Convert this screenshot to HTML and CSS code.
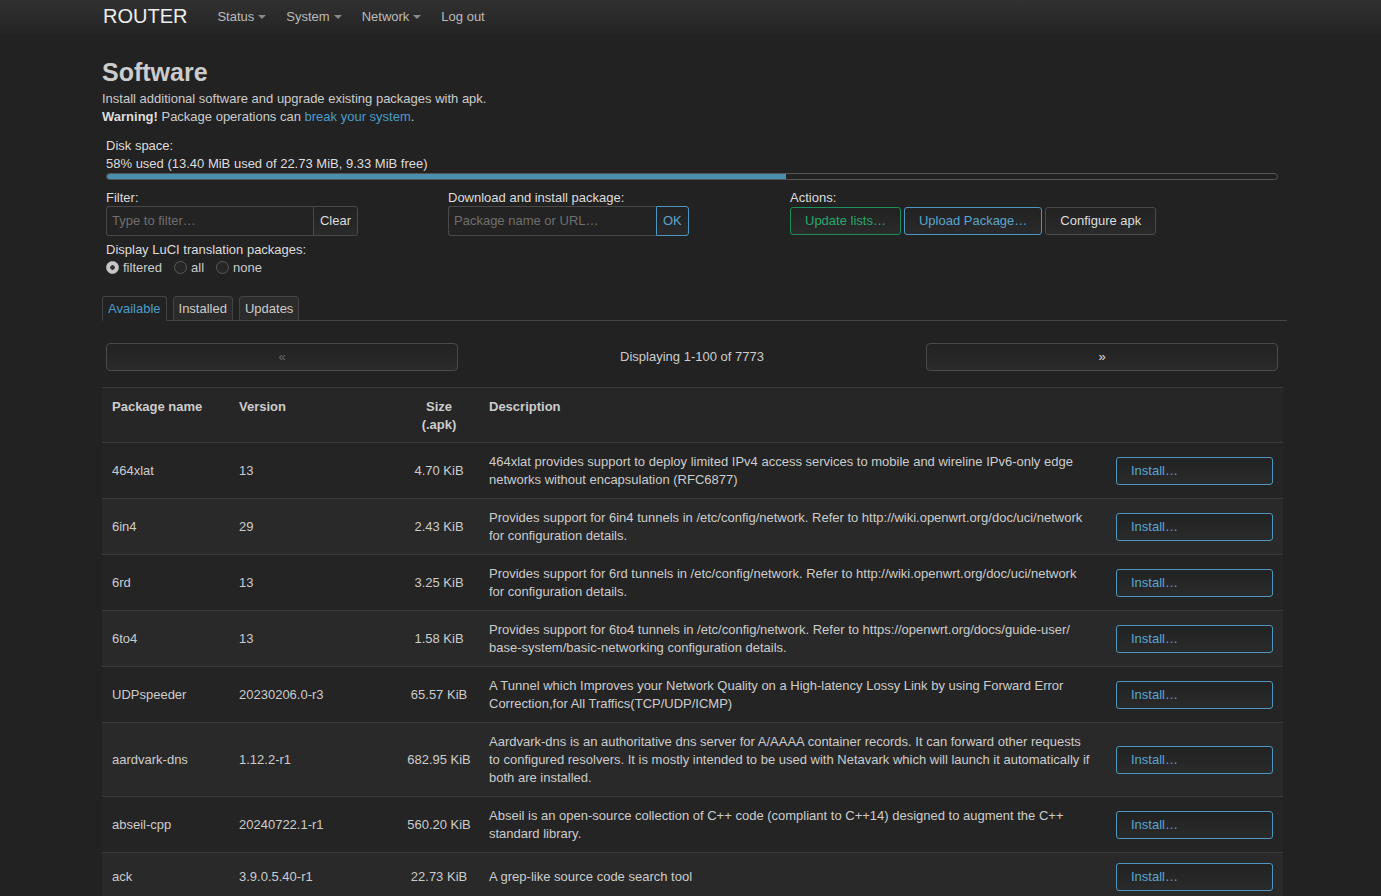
FILE: index.html
```html
<!DOCTYPE html>
<html lang="en">
<head>
    <meta charset="UTF-8">
    <meta name="viewport" content="width=device-width, initial-scale=1.0">
    <title>ROUTER - Software - LuCI</title>
    <link rel="stylesheet" href="styles.css">
</head>
<body>
    <header class="navbar">
        <a class="brand" href="#">ROUTER</a>
        <ul class="nav">
            <li><a href="#">Status<span class="caret"></span></a></li>
            <li><a href="#">System<span class="caret"></span></a></li>
            <li><a href="#">Network<span class="caret"></span></a></li>
            <li><a href="#">Log out</a></li>
        </ul>
    </header>

    <div class="container">
        <h2>Software</h2>
        <div class="map-descr">
            Install additional software and upgrade existing packages with apk.<br>
            <strong>Warning!</strong> Package operations can <a href="#">break your system</a>.
        </div>

        <div class="controls">
            <div class="disk">
                <label>Disk space:</label>
                <div>58% used (13.40 MiB used of 22.73 MiB, 9.33 MiB free)</div>
                <div class="progress"><div class="progress-fill" style="width:58%"></div></div>
            </div>

            <div class="control-row">
                <div class="control">
                    <label>Filter:</label>
                    <div class="input-group">
                        <input type="text" placeholder="Type to filter…">
                        <button class="btn">Clear</button>
                    </div>
                    <label class="radio-title">Display LuCI translation packages:</label>
                    <div class="radios">
                        <label><input type="radio" name="i18n" checked>filtered</label>
                        <label><input type="radio" name="i18n">all</label>
                        <label><input type="radio" name="i18n">none</label>
                    </div>
                </div>
                <div class="control">
                    <label>Download and install package:</label>
                    <div class="input-group">
                        <input type="text" placeholder="Package name or URL…">
                        <button class="btn btn-blue">OK</button>
                    </div>
                </div>
                <div class="control">
                    <label>Actions:</label>
                    <div class="actions">
                        <button class="btn btn-green">Update lists…</button>
                        <button class="btn btn-blue">Upload Package…</button>
                        <button class="btn">Configure apk</button>
                    </div>
                </div>
            </div>
        </div>

        <ul class="tabs">
            <li class="active"><a href="#">Available</a></li>
            <li><a href="#">Installed</a></li>
            <li><a href="#">Updates</a></li>
        </ul>

        <div class="pager">
            <button class="btn page-btn" disabled>«</button>
            <div class="pager-info">Displaying 1-100 of 7773</div>
            <button class="btn page-btn">»</button>
        </div>

        <table class="table">
            <colgroup>
                <col style="width:127px">
                <col style="width:170px">
                <col style="width:80px">
                <col style="width:627px">
                <col style="width:177px">
            </colgroup>
            <thead>
                <tr>
                    <th>Package name</th>
                    <th>Version</th>
                    <th class="center">Size<br>(.apk)</th>
                    <th>Description</th>
                    <th></th>
                </tr>
            </thead>
            <tbody>
                <tr>
                    <td>464xlat</td>
                    <td>13</td>
                    <td class="center">4.70 KiB</td>
                    <td class="descr">464xlat provides support to deploy limited IPv4 access services to mobile and wireline IPv6-only edge networks without encapsulation (RFC6877)</td>
                    <td><button class="btn btn-blue install">Install…</button></td>
                </tr>
                <tr>
                    <td>6in4</td>
                    <td>29</td>
                    <td class="center">2.43 KiB</td>
                    <td class="descr">Provides support for 6in4 tunnels in /etc/config/network. Refer to http://wiki.openwrt.org/doc/uci/network for configuration details.</td>
                    <td><button class="btn btn-blue install">Install…</button></td>
                </tr>
                <tr>
                    <td>6rd</td>
                    <td>13</td>
                    <td class="center">3.25 KiB</td>
                    <td class="descr">Provides support for 6rd tunnels in /etc/config/network. Refer to http://wiki.openwrt.org/doc/uci/network for configuration details.</td>
                    <td><button class="btn btn-blue install">Install…</button></td>
                </tr>
                <tr>
                    <td>6to4</td>
                    <td>13</td>
                    <td class="center">1.58 KiB</td>
                    <td class="descr">Provides support for 6to4 tunnels in /etc/config/network. Refer to https://openwrt.org/docs/guide-user/<wbr>base-system/basic-networking configuration details.</td>
                    <td><button class="btn btn-blue install">Install…</button></td>
                </tr>
                <tr>
                    <td>UDPspeeder</td>
                    <td>20230206.0-r3</td>
                    <td class="center">65.57 KiB</td>
                    <td class="descr">A Tunnel which Improves your Network Quality on a High-latency Lossy Link by using Forward Error Correction,for All Traffics(TCP/UDP/ICMP)</td>
                    <td><button class="btn btn-blue install">Install…</button></td>
                </tr>
                <tr>
                    <td>aardvark-dns</td>
                    <td>1.12.2-r1</td>
                    <td class="center">682.95 KiB</td>
                    <td class="descr">Aardvark-dns is an authoritative dns server for A/AAAA container records. It can forward other requests to configured resolvers. It is mostly intended to be used with Netavark which will launch it automatically if both are installed.</td>
                    <td><button class="btn btn-blue install">Install…</button></td>
                </tr>
                <tr>
                    <td>abseil-cpp</td>
                    <td>20240722.1-r1</td>
                    <td class="center">560.20 KiB</td>
                    <td class="descr">Abseil is an open-source collection of C++ code (compliant to C++14) designed to augment the C++ standard library.</td>
                    <td><button class="btn btn-blue install">Install…</button></td>
                </tr>
                <tr>
                    <td>ack</td>
                    <td>3.9.0.5.40-r1</td>
                    <td class="center">22.73 KiB</td>
                    <td class="descr">A grep-like source code search tool</td>
                    <td><button class="btn btn-blue install">Install…</button></td>
                </tr>
            </tbody>
        </table>
    </div>
</body>
</html>
```

FILE: styles.css
```css
body {
    margin: 0;
    background: #222;
    color: #ccc;
    font-family: "Liberation Sans", Arial, sans-serif;
    font-size: 13px;
    line-height: 18px;
}
a { color: #4a9cc9; text-decoration: none; }

.navbar {
    height: 34px;
    display: flex;
    align-items: center;
    padding-left: 103px;
    background: linear-gradient(#313131, #242424);
}
.brand { color: #eee; font-size: 20px; margin-right: 20px; margin-top: -2px; }
.nav { display: flex; list-style: none; margin: 0; padding: 0; }
.nav a { display: flex; align-items: center; padding: 0 10px; color: #bbb; }
.caret {
    width: 0; height: 0;
    margin-left: 4px;
    border-left: 4px solid transparent;
    border-right: 4px solid transparent;
    border-top: 4px solid #888;
}

.container { width: 1185px; margin-left: 102px; }
h2 {
    margin: 24px 0 4px;
    font-size: 25px;
    line-height: 28px;
    color: #ccc;
}
.map-descr strong { color: #ddd; }

.controls { padding: 0 9px 0 4px; }
.disk { margin-top: 11px; color: #ddd; }
.disk label { display: block; }
.progress {
    height: 5px;
    border: 1px solid #555;
    border-radius: 4px;
    background: #222;
    overflow: hidden;
}
.progress-fill { height: 100%; background: #4a8fb0; }

.control-row { display: grid; grid-template-columns: 342px 342px auto; margin-top: 9px; }
.control label { display: block; color: #ddd; line-height: 17px; }
.input-group { display: flex; width: 252px; height: 30px; }
.input-group input {
    width: 208px;
    box-sizing: border-box;
    background: #232323;
    border: 1px solid #484848;
    border-right: 0;
    border-radius: 3px 0 0 3px;
    padding: 0 5px;
    color: #ccc;
    font: inherit;
    outline: none;
}
.input-group input::placeholder { color: #6f6f6f; }
.input-group .btn { border-radius: 0 3px 3px 0; height: 30px; padding: 0 6px; }

.btn {
    box-sizing: border-box;
    height: 28px;
    padding: 0 14px;
    border: 1px solid #4a4a4a;
    border-radius: 3px;
    background: linear-gradient(#222, #2a2a2a);
    color: #ddd;
    font: inherit;
    cursor: pointer;
}
.btn-blue { border-color: #4b97bf; color: #5aa5cf; }
.btn-green { border-color: #1d8f5b; color: #27a86a; }
.actions { display: flex; gap: 3px; margin-top: 1px; }

.control .radio-title { margin-top: 5px; line-height: 18px; }
.radios { display: flex; }
.radios label { display: flex; align-items: center; margin-right: 12px; color: #ccc; }
.radios input {
    appearance: none;
    width: 13px; height: 13px;
    margin: 0 4px 0 0;
    border: 1px solid #5a5a5a;
    border-radius: 50%;
    background: #262626;
}
.radios input:checked {
    border-color: #bbb;
    background: radial-gradient(circle, #333 0 2px, #c8c8c8 2.5px);
}

.tabs {
    display: flex;
    gap: 6px;
    list-style: none;
    margin: 20px 0 0;
    padding: 0;
    border-bottom: 1px solid #444;
}
.tabs li { margin-bottom: -1px; }
.tabs a {
    display: block;
    padding: 3px 5px 2px;
    border: 1px solid #444;
    border-radius: 3px 3px 0 0;
    background: #2b2b2b;
    color: #ccc;
}
.tabs .active a { background: #222; border-bottom-color: #222; color: #4a9cc9; }

.pager {
    display: grid;
    grid-template-columns: 352px 1fr 352px;
    align-items: center;
    margin: 22px 9px 16px 4px;
}
.pager-info { text-align: center; color: #ccc; }
.page-btn { width: 352px; border-radius: 4px; color: #ddd; }
.page-btn:disabled { color: #666; }

.table {
    width: 1181px;
    table-layout: fixed;
    border-collapse: collapse;
    background: #242424;
}
.table th, .table td {
    padding: 10px 10px 9px;
    border-top: 1px solid #3a3a3a;
    text-align: left;
}
.table th { padding-bottom: 8px; vertical-align: top; background: #262626; color: #ccc; font-weight: bold; }
.table td { vertical-align: middle; }
.table tbody tr:nth-child(even) td { background: #292929; }
.table .center { text-align: center; padding-left: 4px; padding-right: 4px; }
.table .descr { padding-right: 12px; }
.install { width: 157px; text-align: left; }
```
